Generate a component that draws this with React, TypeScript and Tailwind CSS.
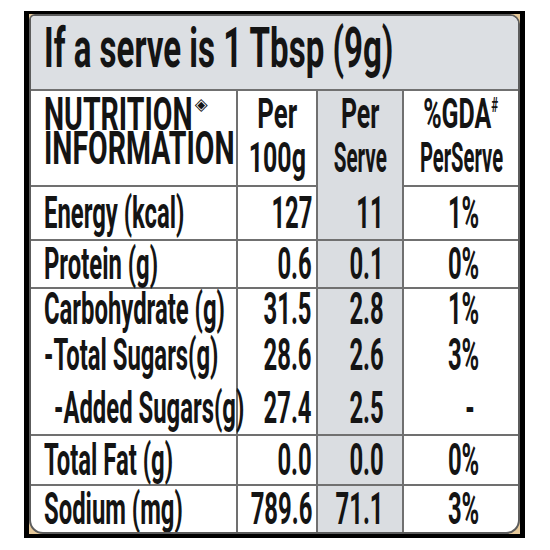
import React from 'react';

type Align = 'left' | 'right' | 'center';

// text is drawn in Roboto and squeezed sideways to get the condensed DIN look of the label
function Txt({
  children,
  align = 'left',
  scale = 'scale-x-[0.53]',
  lead = 'leading-[40px]',
  className = '',
}: {
  children: React.ReactNode;
  align?: Align;
  scale?: string;
  lead?: string;
  className?: string;
}) {
  const origin = align === 'left' ? 'origin-left' : align === 'right' ? 'origin-right' : 'origin-center';
  return <span className={`inline-block whitespace-nowrap ${lead} ${scale} ${origin} ${className}`}>{children}</span>;
}

interface Line {
  label: string;
  indent?: boolean;
  per100: string;
  serve: string;
  gda: string;
}

interface Group {
  lines: Line[];
  heights: string[];
}

const groups: Group[] = [
  { lines: [{ label: 'Energy (kcal)', per100: '127', serve: '11', gda: '1%' }], heights: ['h-[52px]'] },
  { lines: [{ label: 'Protein (g)', per100: '0.6', serve: '0.1', gda: '0%' }], heights: ['h-[46px]'] },
  {
    lines: [
      { label: 'Carbohydrate (g)', per100: '31.5', serve: '2.8', gda: '1%' },
      { label: '-Total Sugars(g)', per100: '28.6', serve: '2.6', gda: '3%' },
      { label: '-Added Sugars(g)', indent: true, per100: '27.4', serve: '2.5', gda: '-' },
    ],
    heights: ['h-[40px]', 'h-[52px]', 'h-[53px]'],
  },
  { lines: [{ label: 'Total Fat (g)', per100: '0.0', serve: '0.0', gda: '0%' }], heights: ['h-[48px]'] },
  { lines: [{ label: 'Sodium (mg)', per100: '789.6', serve: '71.1', gda: '3%' }], heights: ['h-[46px]'] },
];

const grid = 'grid grid-cols-[207px_80px_86px_114px]';
const line = 'border-[#707070]';

export default function App() {
  return (
    <div className="w-[550px] h-[550px] bg-white pt-[11px] pl-[24px] font-['Roboto','Liberation_Sans',sans-serif] font-bold text-[#141414] leading-none">
      <div className="w-[501px] h-[527px] border-black border-l-[5px] border-r-[5px] border-t-[3px] border-b-[4px] bg-[#e6c99a]">
        <div className="h-full rounded-tl-[6px] rounded-tr-[10px] rounded-b-[14px] border-2 border-[#5c5c5c] bg-white overflow-hidden">
          {/* serve size header */}
          <div className={`h-[75px] bg-[#dcdfe3] border-b-2 ${line} flex items-center pl-[13px] pb-[10px]`}>
            <Txt scale="scale-x-[0.59]" lead="leading-none" className="text-[56px]">
              If a serve is 1 Tbsp (9g)
            </Txt>
          </div>

          {/* column titles */}
          <div className={`${grid} h-[96px] border-b-2 ${line}`}>
            <div className={`border-r-2 ${line} flex flex-col items-start justify-center pl-[13px] pb-[20px] text-[46px]`}>
              <Txt scale="scale-x-[0.62]" lead="leading-[34px]">
                NUTRITION
                <span className="inline-block align-top text-[17px] leading-none scale-x-[1.6] ml-[7px] mt-[-1px] font-['DejaVu_Sans',sans-serif]">◈</span>
              </Txt>
              <Txt scale="scale-x-[0.62]" lead="leading-[34px]">INFORMATION</Txt>
            </div>
            <div className={`border-r-2 ${line} flex flex-col items-center justify-center pb-[12px] text-[43px]`}>
              <Txt align="center" scale="scale-x-[0.6]" lead="leading-[44px]">Per</Txt>
              <Txt align="center" scale="scale-x-[0.58]" lead="leading-[44px]">100g</Txt>
            </div>
            <div className={`border-r-2 ${line} bg-[#dadde1] flex flex-col items-center justify-center pb-[12px] text-[43px]`}>
              <Txt align="center" scale="scale-x-[0.58]" lead="leading-[44px]">Per</Txt>
              <Txt align="center" scale="scale-x-[0.48]" lead="leading-[44px]">Serve</Txt>
            </div>
            <div className="flex flex-col items-center justify-center pb-[12px] text-[43px]">
              <Txt align="center" scale="scale-x-[0.58]" lead="leading-[44px]">
                %GDA<span className="inline-block align-top text-[20px] leading-none mt-[4px]">#</span>
              </Txt>
              <Txt align="center" scale="scale-x-[0.47]" lead="leading-[44px]">PerServe</Txt>
            </div>
          </div>

          {/* nutrient rows */}
          {groups.map((g, gi) => (
            <div key={gi} className={`${grid} ${gi < groups.length - 1 ? `border-b-2 ${line}` : ''}`}>
              <div className={`border-r-2 ${line}`}>
                {g.lines.map((l, i) => (
                  <div key={i} className={`${g.heights[i]} flex items-center text-[45px] ${l.indent ? 'pl-[23px]' : 'pl-[13px]'}`}>
                    <Txt>{l.label}</Txt>
                  </div>
                ))}
              </div>
              <div className={`border-r-2 ${line}`}>
                {g.lines.map((l, i) => (
                  <div key={i} className={`${g.heights[i]} flex items-center justify-end pr-[4px] text-[45px]`}>
                    <Txt align="right">{l.per100}</Txt>
                  </div>
                ))}
              </div>
              <div className={`border-r-2 ${line} bg-[#dadde1]`}>
                {g.lines.map((l, i) => (
                  <div key={i} className={`${g.heights[i]} flex items-center justify-end pr-[18px] text-[45px]`}>
                    <Txt align="right">{l.serve}</Txt>
                  </div>
                ))}
              </div>
              <div>
                {g.lines.map((l, i) => (
                  <div key={i} className={`${g.heights[i]} flex items-center justify-center text-[45px] ${l.gda === '-' ? 'pl-[18px]' : 'pl-[6px]'}`}>
                    <Txt align="center">{l.gda}</Txt>
                  </div>
                ))}
              </div>
            </div>
          ))}
        </div>
      </div>
    </div>
  );
}
